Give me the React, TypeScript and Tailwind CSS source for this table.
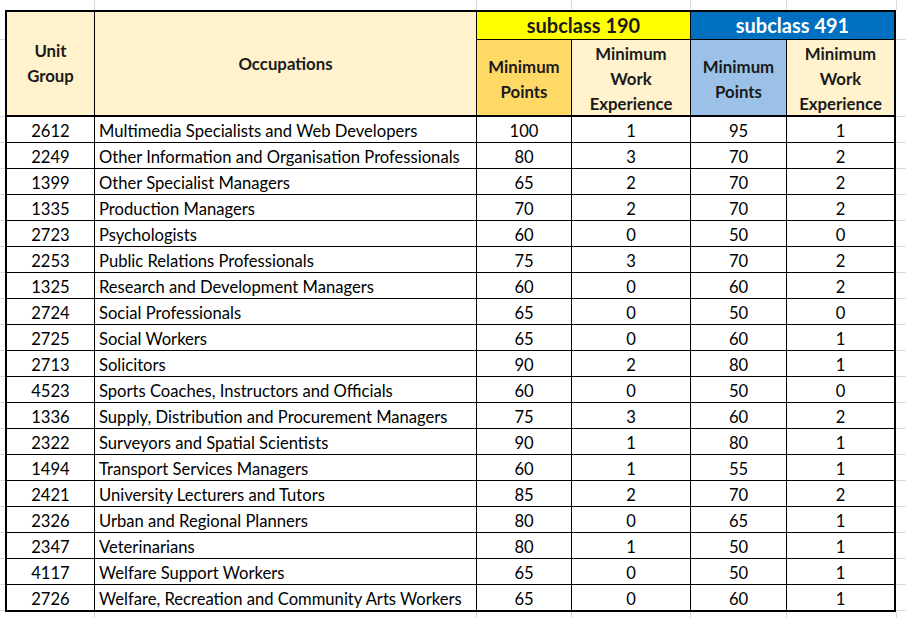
const rows: [string, string, number, number, number, number][] = [
  ["2612", "Multimedia Specialists and Web Developers", 100, 1, 95, 1],
  ["2249", "Other Information and Organisation Professionals", 80, 3, 70, 2],
  ["1399", "Other Specialist Managers", 65, 2, 70, 2],
  ["1335", "Production Managers", 70, 2, 70, 2],
  ["2723", "Psychologists", 60, 0, 50, 0],
  ["2253", "Public Relations Professionals", 75, 3, 70, 2],
  ["1325", "Research and Development Managers", 60, 0, 60, 2],
  ["2724", "Social Professionals", 65, 0, 50, 0],
  ["2725", "Social Workers", 65, 0, 60, 1],
  ["2713", "Solicitors", 90, 2, 80, 1],
  ["4523", "Sports Coaches, Instructors and Officials", 60, 0, 50, 0],
  ["1336", "Supply, Distribution and Procurement Managers", 75, 3, 60, 2],
  ["2322", "Surveyors and Spatial Scientists", 90, 1, 80, 1],
  ["1494", "Transport Services Managers", 60, 1, 55, 1],
  ["2421", "University Lecturers and Tutors", 85, 2, 70, 2],
  ["2326", "Urban and Regional Planners", 80, 0, 65, 1],
  ["2347", "Veterinarians", 80, 1, 50, 1],
  ["4117", "Welfare Support Workers", 65, 0, 50, 1],
  ["2726", "Welfare, Recreation and Community Arts Workers", 65, 0, 60, 1],
];

// faint sheet gridlines around the table
function ColumnStrip({ h }: { h: string }) {
  return (
    <div className={`flex ${h}`}>
      <div className="w-[95px] border-r border-[#dadada]" />
      <div className="w-[382px] border-r border-[#dadada]" />
      <div className="w-[95px] border-r border-[#dadada]" />
      <div className="w-[119px] border-r border-[#dadada]" />
      <div className="w-[96px] border-r border-[#dadada]" />
      <div className="w-[110px] border-r border-[#dadada]" />
    </div>
  );
}

function RowStrip({ w }: { w: string }) {
  return (
    <div className={`flex flex-col ${w}`}>
      <div className="h-[30px] border-b border-[#dadada]" />
      <div className="h-[77px] border-b border-[#dadada]" />
      {rows.map((r) => (
        <div key={r[0]} className="h-[26px] border-b border-[#dadada]" />
      ))}
    </div>
  );
}

export default function App() {
  const cell = "flex items-center justify-center border-r border-b border-black";
  return (
    <div
      className="w-[906px] h-[618px] bg-white overflow-hidden text-black"
      style={{ fontFamily: "Lato, 'Liberation Sans', sans-serif" }}
    >
      <ColumnStrip h="h-[10px]" />
      <div className="flex">
        <RowStrip w="w-[5px]" />
        <div className="border-2 border-black">
          <div className="grid grid-cols-[88px_382px_95px_119px_96px_107px] grid-rows-[28px_77px] bg-[#fff2cc] font-bold text-[16.8px] leading-[25px] text-[#1a1a1a]">
            <div className={`${cell} row-span-2 text-center border-b-2 pb-[2px]`}>
              Unit
              <br />
              Group
            </div>
            <div className={`${cell} row-span-2 border-b-2 pb-[1px]`}>Occupations</div>
            <div className={`${cell} col-span-2 bg-[#ffff00] text-[20px] pb-[1px]`}>subclass 190</div>
            <div className={`${cell} col-span-2 bg-[#0070c0] text-[20px] text-white border-r-0 pb-[1px]`}>
              subclass 491
            </div>
            <div className={`${cell} border-b-2 bg-[#ffd966] text-center pt-[2px]`}>
              Minimum
              <br />
              Points
            </div>
            <div className={`${cell} border-b-2 text-center pt-[2px]`}>
              Minimum
              <br />
              Work
              <br />
              Experience
            </div>
            <div className={`${cell} border-b-2 bg-[#9bc2e6] text-center pt-[2px]`}>
              Minimum
              <br />
              Points
            </div>
            <div className={`${cell} border-b-2 border-r-0 text-center pt-[2px]`}>
              Minimum
              <br />
              Work
              <br />
              Experience
            </div>
          </div>
          {rows.map((r, i) => {
            const last = i === rows.length - 1 ? "border-b-0 h-[25px]" : "h-[26px]";
            return (
              <div
                key={r[0]}
                className="grid grid-cols-[88px_382px_95px_119px_96px_107px] text-[16.6px]"
              >
                <div className={`${cell} ${last} pt-[4px]`}>{r[0]}</div>
                <div className={`${cell} ${last} pt-[4px] justify-start pl-[4px]`}>{r[1]}</div>
                <div className={`${cell} ${last} pt-[4px]`}>{r[2]}</div>
                <div className={`${cell} ${last} pt-[4px]`}>{r[3]}</div>
                <div className={`${cell} ${last} pt-[4px]`}>{r[4]}</div>
                <div className={`${cell} ${last} pt-[4px] border-r-0`}>{r[5]}</div>
              </div>
            );
          })}
        </div>
        <RowStrip w="flex-1" />
      </div>
      <ColumnStrip h="h-[10px]" />
    </div>
  );
}
